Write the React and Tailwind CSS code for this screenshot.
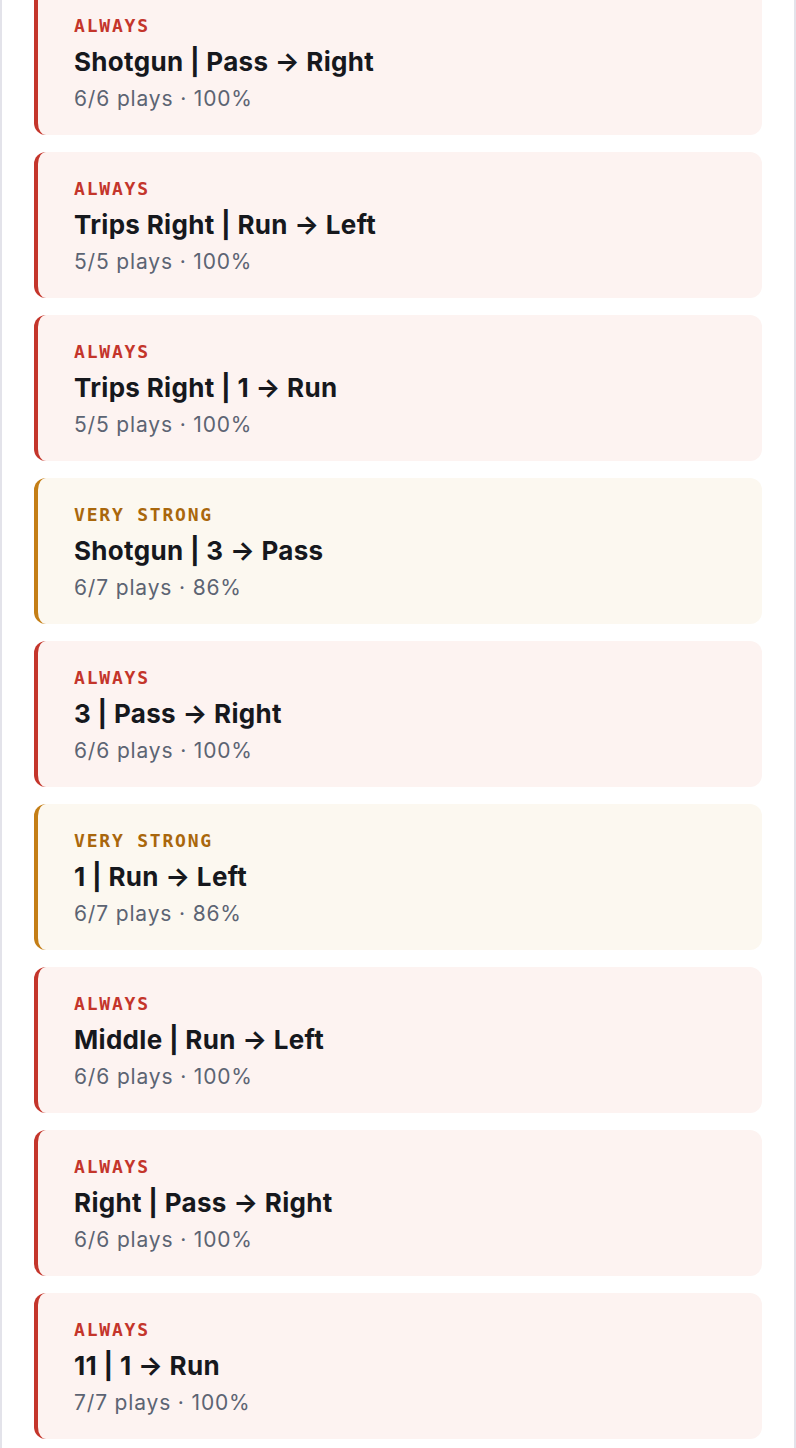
const patterns = [
  { level: "always", title: "Shotgun | Pass → Right", meta: "6/6 plays · 100%" },
  { level: "always", title: "Trips Right | Run → Left", meta: "5/5 plays · 100%" },
  { level: "always", title: "Trips Right | 1 → Run", meta: "5/5 plays · 100%" },
  { level: "strong", title: "Shotgun | 3 → Pass", meta: "6/7 plays · 86%" },
  { level: "always", title: "3 | Pass → Right", meta: "6/6 plays · 100%" },
  { level: "strong", title: "1 | Run → Left", meta: "6/7 plays · 86%" },
  { level: "always", title: "Middle | Run → Left", meta: "6/6 plays · 100%" },
  { level: "always", title: "Right | Pass → Right", meta: "6/6 plays · 100%" },
  { level: "always", title: "11 | 1 → Run", meta: "7/7 plays · 100%" },
];

const styles = {
  always: {
    card: "bg-[#fdf3f1] border-[#c4352b]",
    label: "text-[#c4352b]",
    text: "ALWAYS",
  },
  strong: {
    card: "bg-[#fcf8f0] border-[#c47e16]",
    label: "text-[#a9670c]",
    text: "VERY STRONG",
  },
};

const PatternCard = ({ level, title, meta }) => {
  const s = styles[level];
  return (
    <div className={`rounded-xl border-l-4 h-[146px] pl-[36px] pr-6 pt-6 ${s.card}`}>
      <div
        className={`font-bold text-[18px] leading-[26px] tracking-[0.1em] ${s.label}`}
        style={{ fontFamily: '"DejaVu Sans Mono", "Liberation Mono", monospace' }}
      >
        {s.text}
      </div>
      <div className="mt-2 text-[26px] leading-[30px] font-bold tracking-[0.012em] text-[#16181d] whitespace-nowrap">
        {title}
      </div>
      <div className="mt-2 text-[21px] leading-[28px] tracking-[0.04em] text-[#5c6473]">{meta}</div>
    </div>
  );
};

export default function App() {
  return (
    <div
      className="min-h-screen bg-white border-x-2 border-[#e3e3ea] px-8 overflow-hidden"
      style={{ fontFamily: 'Inter, "Liberation Sans", sans-serif' }}
    >
      <div className="-mt-[11px] flex flex-col gap-[17px] pb-2">
        {patterns.map((p, i) => (
          <PatternCard key={i} {...p} />
        ))}
      </div>
    </div>
  );
}
